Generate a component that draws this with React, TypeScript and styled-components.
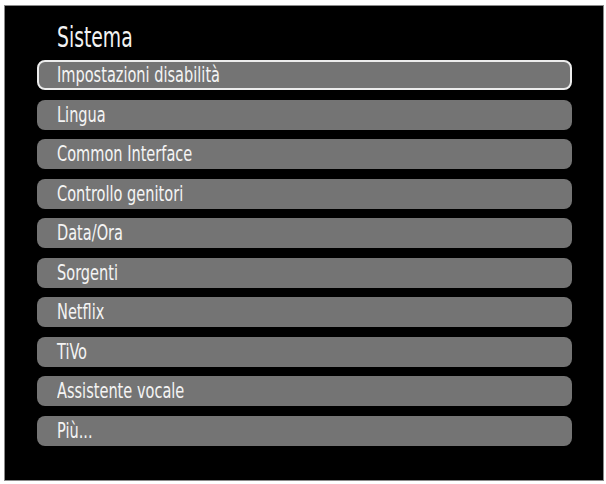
import React from 'react';
import styled, { createGlobalStyle } from 'styled-components';

const GlobalStyle = createGlobalStyle`
  html, body {
    margin: 0;
    padding: 0;
    background: #ffffff;
  }
`;

const menuItems: string[] = [
  'Impostazioni disabilità',
  'Lingua',
  'Common Interface',
  'Controllo genitori',
  'Data/Ora',
  'Sorgenti',
  'Netflix',
  'TiVo',
  'Assistente vocale',
  'Più...',
];

const App: React.FC = () => {
  return (
    <>
      <GlobalStyle />
      <Screen>
        <Panel>
          <Title>
            <Narrow squeeze={0.72}>Sistema</Narrow>
          </Title>
          <MenuList>
            {menuItems.map((label, i) => (
              <MenuItem key={label} selected={i === 0}>
                <Narrow squeeze={0.77}>{label}</Narrow>
              </MenuItem>
            ))}
          </MenuList>
        </Panel>
      </Screen>
    </>
  );
};

export default App;

const Screen = styled.div`
  width: 606px;
  height: 484px;
  padding: 5px 2px 3px 4px;
  box-sizing: border-box;
  background: #ffffff;
`;

const Panel = styled.div`
  height: 100%;
  box-sizing: border-box;
  background: #000000;
  border: 1px solid #8a8a8a;
  padding: 12px 31px 0 32px;
  font-family: 'DejaVu Sans Condensed', 'DejaVu Sans', sans-serif;
  color: #f2f2f2;
`;

// the TV menu font is a tall condensed face, so the glyphs get squeezed sideways
const Narrow = styled.span<{ squeeze: number }>`
  display: inline-block;
  white-space: nowrap;
  transform: scaleX(${(p) => p.squeeze});
  transform-origin: left center;
`;

const Title = styled.h1`
  margin: 0 0 0 20px;
  font-size: 29px;
  font-weight: normal;
  line-height: 38px;
  height: 42px;
`;

const MenuList = styled.div`
  display: flex;
  flex-direction: column;
  gap: 9.5px;
`;

const MenuItem = styled.div<{ selected?: boolean }>`
  height: 30px;
  box-sizing: border-box;
  display: flex;
  align-items: center;
  padding-left: ${(p) => (p.selected ? '18px' : '20px')};
  background: #747474;
  border-radius: 8px;
  border: ${(p) => (p.selected ? '2px solid #ececec' : 'none')};
  font-size: 21px;
  color: #f4f4f4;
`;
